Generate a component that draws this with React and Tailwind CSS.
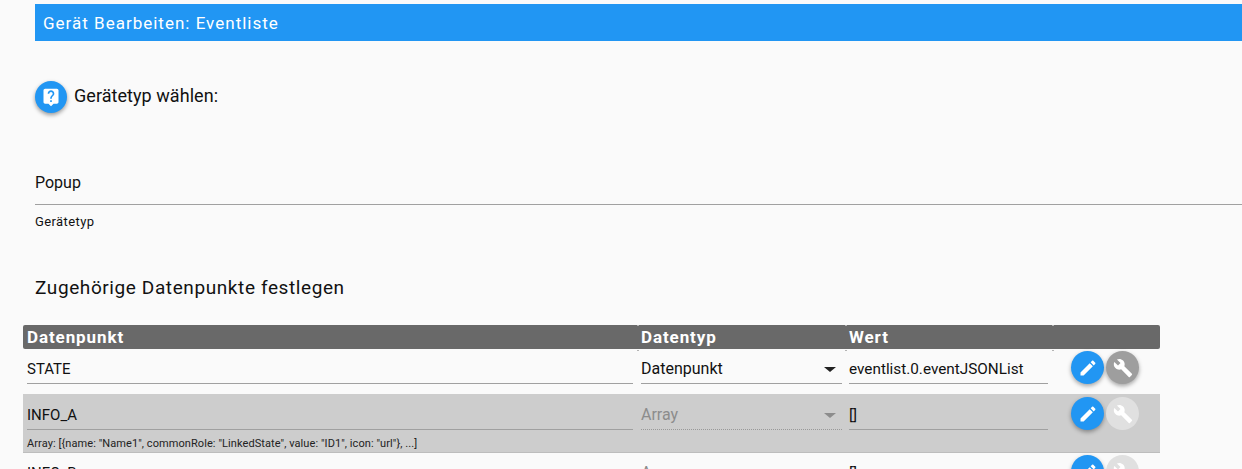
const EDIT = 'M3 17.25V21h3.75L17.81 9.94l-3.75-3.75L3 17.25zM20.71 7.04c.39-.39.39-1.02 0-1.41l-2.34-2.34c-.39-.39-1.02-.39-1.41 0l-1.83 1.83 3.75 3.75 1.83-1.83z'
const WRENCH = 'M22.7 19l-9.1-9.1c.9-2.3.4-5-1.5-6.9-2-2-5-2.4-7.4-1.3L9 6 6 9 1.6 4.7C.4 7.1.9 10.1 2.9 12.1c1.9 1.9 4.6 2.4 6.9 1.5l9.1 9.1c.4.4 1 .4 1.4 0l2.3-2.3c.5-.4.5-1.1 0-1.4z'
const HELP = 'M19 2H5c-1.11 0-2 .9-2 2v14c0 1.1.89 2 2 2h4l3 3 3-3h4c1.1 0 2-.9 2-2V4c0-1.1-.9-2-2-2zm-6 16h-2v-2h2v2zm2.07-7.75l-.9.92C13.45 11.9 13 12.5 13 14h-2v-.5c0-1.1.45-2.1 1.17-2.83l1.24-1.26c.37-.36.59-.86.59-1.41 0-1.1-.9-2-2-2s-2 .9-2 2H8c0-2.21 1.79-4 4-4s4 1.79 4 4c0 .88-.36 1.68-.93 2.25z'

const GRID = 'grid grid-cols-[614px_208px_207px_108px]'
// the little light ticks at the top and bottom of each header column edge
const NOTCH = "relative flex h-full items-center pl-1 before:absolute before:left-0 before:top-0 before:h-px before:w-[2px] before:bg-[#b4b4b4] after:absolute after:bottom-0 after:left-0 after:h-px after:w-[2px] after:bg-[#b4b4b4]"

function Icon({ d, size = 20 }) {
  return (
    <svg width={size} height={size} viewBox="0 0 24 24" fill="currentColor">
      <path d={d} />
    </svg>
  )
}

function RoundButton({ d, className }) {
  return (
    <div className={`flex size-[33px] shrink-0 items-center justify-center rounded-full text-white ${className}`}>
      <Icon d={d} />
    </div>
  )
}

function Field({ children, className = '', lineClass = 'border-b border-[#a0a0a0]' }) {
  return <div className={`flex h-[25px] items-center ${lineClass} ${className}`}>{children}</div>
}

function Row({ name, type, value, disabled, hint, className = '', top = 'pt-[10px]', btnTop = 'pt-[2px]' }) {
  return (
    <div className={`${GRID} ${className}`}>
      <div className={`pl-1 pr-1 ${top}`}>
        <Field className="pb-[3px] text-[15px]">{name}</Field>
        {hint && <p className="mt-[8px] text-[11px] leading-3 tracking-[0.08px] text-[#222]">{hint}</p>}
      </div>
      <div className={`pl-1 pr-[3px] ${top}`}>
        <Field
          className={`justify-between pr-[6px] pb-1 text-base ${disabled ? 'text-[#8c8c8c]' : ''}`}
          lineClass={disabled ? 'border-b border-dotted border-[#999]' : 'border-b border-[#a0a0a0]'}
        >
          {type}
          <span className={`size-0 border-x-[6px] border-t-[5px] border-x-transparent ${disabled ? 'border-t-[#8c8c8c]' : 'border-t-[#222]'}`} />
        </Field>
      </div>
      <div className={`pl-1 pr-1 ${top}`}>
        <Field className="pb-[3px] text-[15.3px]">{value}</Field>
      </div>
      <div className={`flex gap-[2px] pl-[19px] ${btnTop}`}>
        <RoundButton d={EDIT} className="bg-[#2196f3] shadow-[0_2px_4px_rgba(0,0,0,0.35)]" />
        <RoundButton
          d={WRENCH}
          className={disabled ? 'bg-[#e0e0e0]' : 'bg-[#9e9e9e] shadow-[0_2px_4px_rgba(0,0,0,0.35)]'}
        />
      </div>
    </div>
  )
}

export default function App() {
  return (
    <div className="h-[469px] overflow-hidden bg-[#fafafa] pt-1 font-['Roboto',sans-serif] text-[#111]">
      <div className="ml-[35px] flex h-[37px] items-center bg-[#2196f3] pl-2 pt-[2px] text-[17px] tracking-[1px] text-white">
        Gerät Bearbeiten: Eventliste
      </div>

      <div className="ml-[35px] mt-10 flex items-center gap-[7px]">
        <div className="flex size-8 items-center justify-center rounded-full bg-[#2196f3] text-white shadow-[0_2px_4px_rgba(0,0,0,0.4)]">
          <Icon d={HELP} />
        </div>
        <span className="-mt-[3px] text-lg tracking-[0.05px]">Gerätetyp wählen:</span>
      </div>

      <div className="ml-[35px] mt-[56px] h-[36px] border-b border-[#a0a0a0] pt-[2px] text-base leading-6">Popup</div>
      <p className="ml-[35px] mt-[10px] text-[13px] leading-[14px] tracking-[0.4px]">Gerätetyp</p>

      <h2 className="ml-[35px] mt-[47px] text-[19px] leading-[24px] tracking-[0.6px]">Zugehörige Datenpunkte festlegen</h2>

      <div className="ml-[23px] mt-[25px] w-[1137px]">
        <div className={`${GRID} h-6 items-center rounded-[2px] bg-[#696969] text-[17px] font-bold tracking-[0.9px] text-white`}>
          <div className="pl-1">Datenpunkt</div>
          <div className={NOTCH}>Datentyp</div>
          <div className={NOTCH}>Wert</div>
          <div className={NOTCH} />
        </div>
        <Row name="STATE" type="Datenpunkt" value="eventlist.0.eventJSONList" className="h-[45px]" />
        <Row
          name="INFO_A"
          type="Array"
          value="[]"
          disabled
          hint={'Array: [{name: "Name1", commonRole: "LinkedState", value: "ID1", icon: "url"}, ...]'}
          className="h-[59px] border-b border-[#bdbdbd] bg-[#cdcdcd]"
          top="pt-[11px]"
          btnTop="pt-[3px]"
        />
        <Row name="INFO_B" type="Array" value="[]" disabled className="h-[45px]" />
      </div>
    </div>
  )
}
